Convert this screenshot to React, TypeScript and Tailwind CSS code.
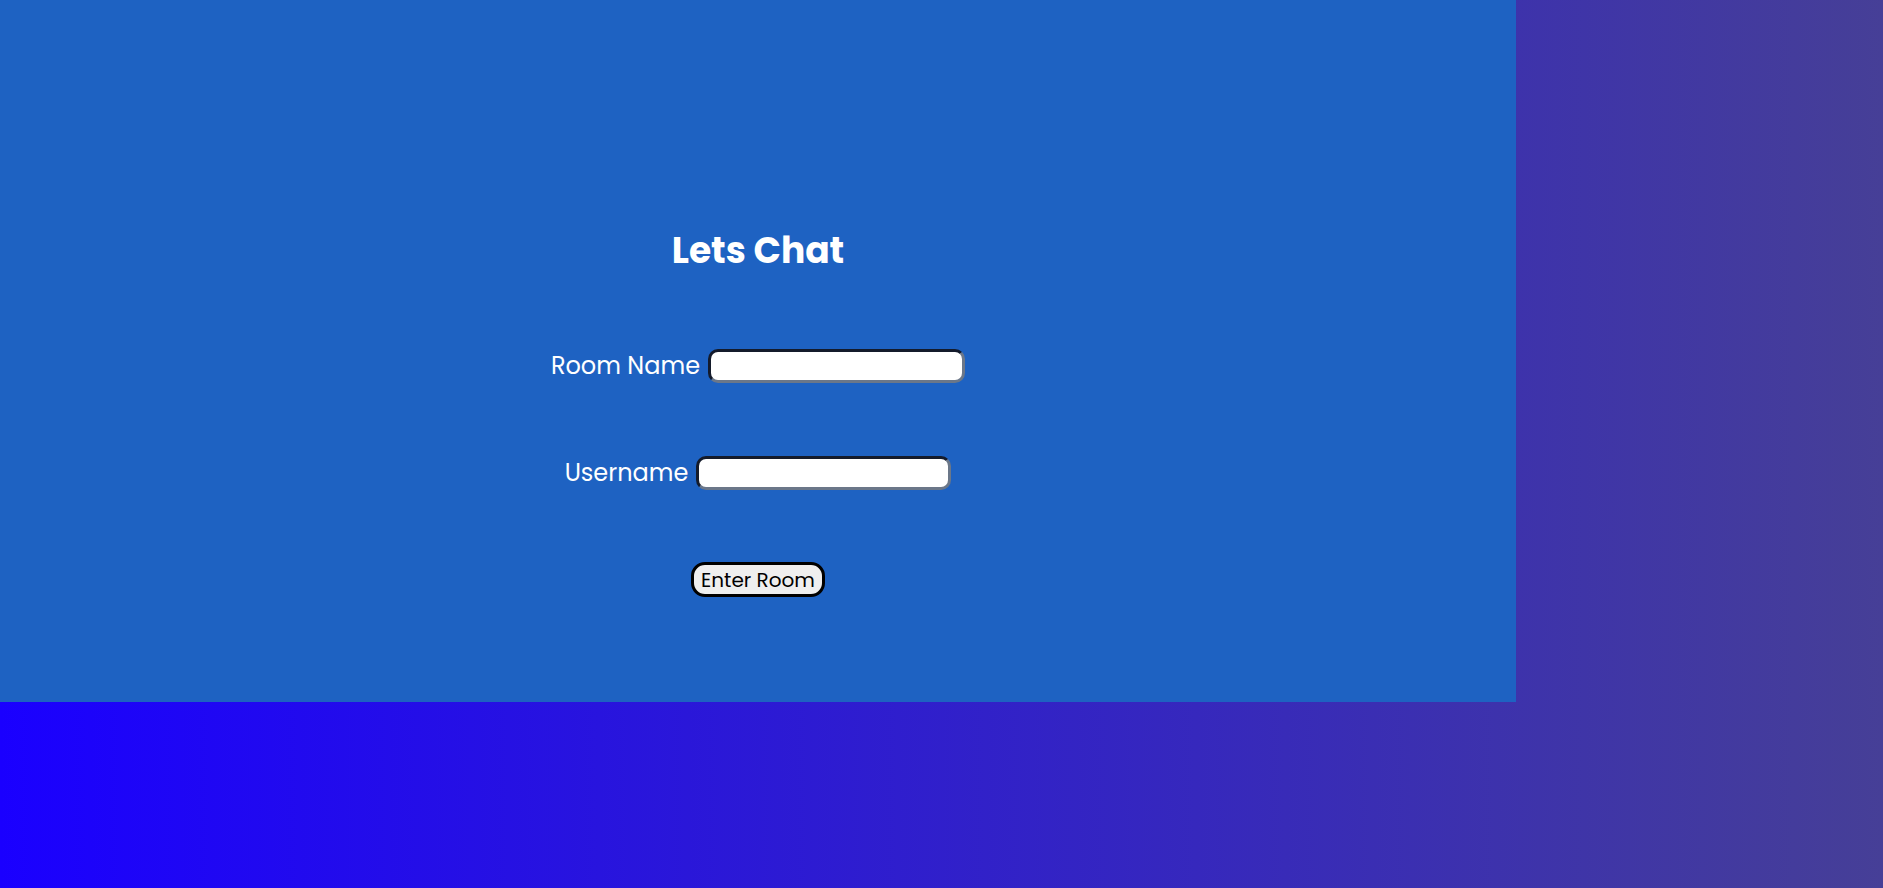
import { useState } from 'react';

export default function App() {
  const [room, setRoom] = useState('');
  const [username, setUsername] = useState('');

  return (
    <div className="h-[888px] w-full bg-[linear-gradient(to_right,#1a00ff,#463f97)] font-['Poppins','Open_Sans',sans-serif]">
      <div className="flex h-[702px] w-[1516px] flex-col items-center bg-[#1e62c2] pt-[224px]">
        <h1 className="h-[54px] text-[36px] font-bold leading-[54px] text-white">Lets Chat</h1>

        <div className="mt-[71px] flex h-[34px] items-center gap-2">
          <label className="text-[24px] text-white">Room Name</label>
          <input
            value={room}
            onChange={(e) => setRoom(e.target.value)}
            className="h-[34px] w-[257px] rounded-[10px] border-[3px] border-t-[#141b2b] border-l-[#141b2b] border-r-[#6b7789] border-b-[#6b7789] bg-white px-2 outline-none"
          />
        </div>

        <div className="mt-[73px] flex h-[34px] items-center gap-2">
          <label className="text-[24px] text-white">Username</label>
          <input
            value={username}
            onChange={(e) => setUsername(e.target.value)}
            className="h-[34px] w-[255px] rounded-[10px] border-[3px] border-t-[#141b2b] border-l-[#141b2b] border-r-[#6b7789] border-b-[#6b7789] bg-white px-2 outline-none"
          />
        </div>

        <button className="mt-[72px] h-[35px] rounded-[14px] border-[3px] border-black bg-[#efefef] px-[7px] text-[20px] leading-none text-black">
          Enter Room
        </button>
      </div>
    </div>
  );
}
